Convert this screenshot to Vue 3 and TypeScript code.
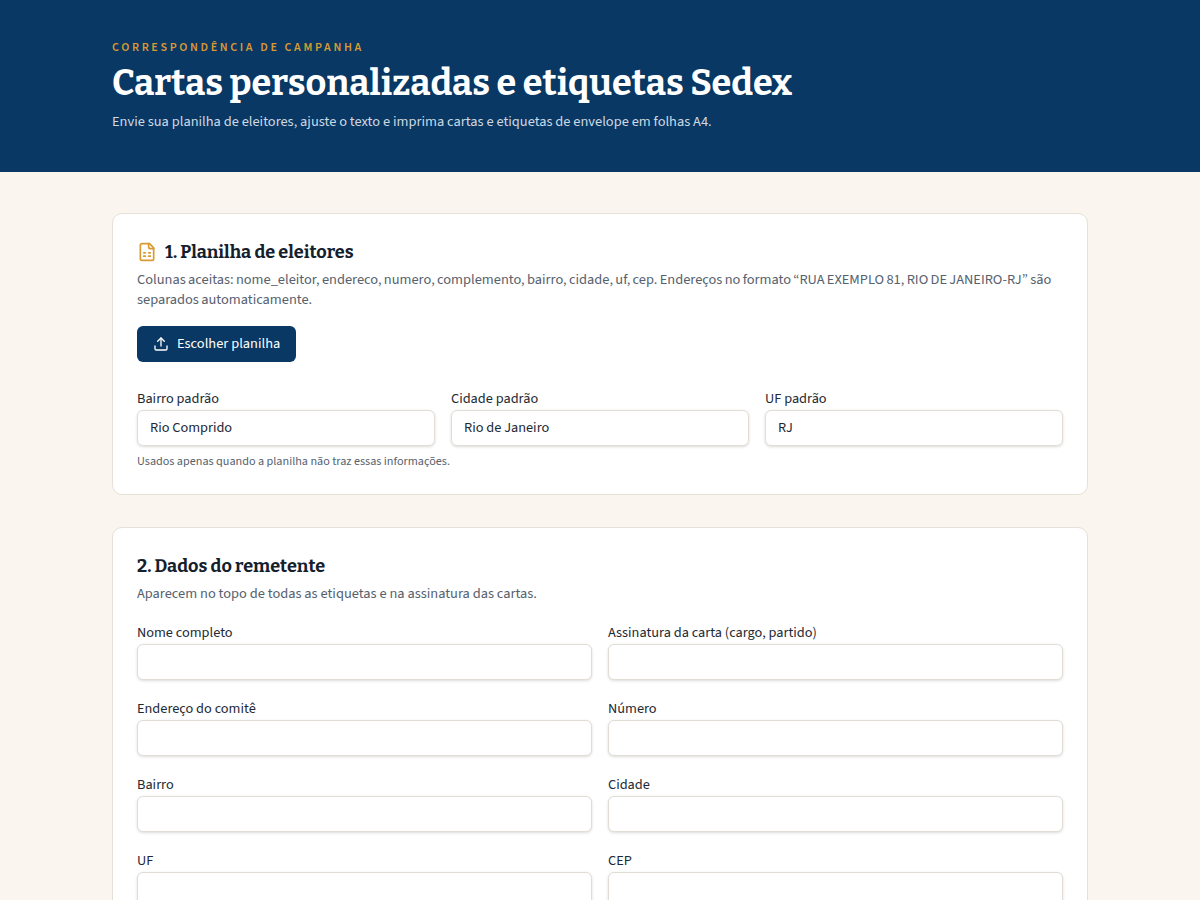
<script setup lang="ts">
interface Field { label: string; value?: string }
const defaults: Field[] = [
  { label: 'Bairro padrão', value: 'Rio Comprido' },
  { label: 'Cidade padrão', value: 'Rio de Janeiro' },
  { label: 'UF padrão', value: 'RJ' },
]
const sender: Field[] = [
  { label: 'Nome completo' },
  { label: 'Assinatura da carta (cargo, partido)' },
  { label: 'Endereço do comitê' },
  { label: 'Número' },
  { label: 'Bairro' },
  { label: 'Cidade' },
  { label: 'UF' },
  { label: 'CEP' },
]
</script>

<template>
  <div class="page">
    <header class="hero">
      <div class="wrap">
        <p class="eyebrow">Correspondência de campanha</p>
        <h1>Cartas personalizadas e etiquetas Sedex</h1>
        <p class="lead">Envie sua planilha de eleitores, ajuste o texto e imprima cartas e etiquetas de envelope em folhas A4.</p>
      </div>
    </header>
    <main class="wrap main">
      <section class="card">
        <h2>
          <svg class="sheet" viewBox="0 0 24 24" width="20" height="20" fill="none" stroke="currentColor" stroke-width="2" stroke-linecap="round" stroke-linejoin="round">
            <path d="M15 2H6a2 2 0 0 0-2 2v16a2 2 0 0 0 2 2h12a2 2 0 0 0 2-2V7Z" />
            <path d="M14 2v4a2 2 0 0 0 2 2h4" />
            <path d="M8 13h2" /><path d="M14 13h2" /><path d="M8 17h2" /><path d="M14 17h2" />
          </svg>
          1. Planilha de eleitores
        </h2>
        <p class="desc tight">Colunas aceitas: nome_eleitor, endereco, numero, complemento, bairro, cidade, uf, cep. Endereços no formato “RUA EXEMPLO 81, RIO DE JANEIRO-RJ” são separados automaticamente.</p>
        <button class="btn" type="button">
          <svg viewBox="0 0 24 24" width="16" height="16" fill="none" stroke="currentColor" stroke-width="2" stroke-linecap="round" stroke-linejoin="round">
            <path d="M21 15v4a2 2 0 0 1-2 2H5a2 2 0 0 1-2-2v-4" />
            <polyline points="17 8 12 3 7 8" />
            <line x1="12" y1="3" x2="12" y2="15" />
          </svg>
          Escolher planilha
        </button>
        <div class="grid three">
          <label v-for="f in defaults" :key="f.label" class="field">
            <span>{{ f.label }}</span>
            <input type="text" :value="f.value" />
          </label>
        </div>
        <p class="hint">Usados apenas quando a planilha não traz essas informações.</p>
      </section>
      <section class="card">
        <h2>2. Dados do remetente</h2>
        <p class="desc">Aparecem no topo de todas as etiquetas e na assinatura das cartas.</p>
        <div class="grid two">
          <label v-for="f in sender" :key="f.label" class="field">
            <span>{{ f.label }}</span>
            <input type="text" />
          </label>
        </div>
      </section>
    </main>
  </div>
</template>

<style>
html, body { margin: 0; background: #faf5ee; }
</style>

<style scoped>
.page {
  font-family: "Source Sans 3", "Noto Sans CJK KR", "Noto Sans", sans-serif;
  color: #14202c;
  font-size: 14.4px;
  line-height: 20px;
  background: #faf5ee;
  min-height: 900px;
}
.wrap { width: 976px; margin: 0 auto; }
.hero { background: #083863; height: 172px; box-sizing: border-box; padding-top: 40px; }
.eyebrow {
  margin: 0;
  font-size: 12px;
  line-height: 16px;
  font-weight: 600;
  letter-spacing: 0.22em;
  text-transform: uppercase;
  color: #d99a32;
}
h1 {
  margin: 7px 0 0;
  font-family: "Bitter", "DejaVu Serif Condensed", "DejaVu Serif", serif;
  font-size: 36px;
  line-height: 40px;
  font-weight: 700;
  color: #fff;
}
.lead { margin: 9px 0 0; color: #cfd9e3; }
.main { padding-top: 41px; display: flex; flex-direction: column; gap: 32px; }
.card {
  background: #fff;
  border: 1px solid #e6e0d6;
  border-radius: 10px;
  padding: 24px;
}
h2 {
  margin: 0;
  display: flex;
  align-items: center;
  gap: 8px;
  font-family: "Bitter", "DejaVu Serif Condensed", "DejaVu Serif", serif;
  font-size: 18px;
  line-height: 28px;
  font-weight: 700;
  color: #14202c;
}
.sheet { color: #d99a32; }
.desc { margin: 4px 0 0; color: #56616e; }
.tight { word-spacing: -0.55px; }
.btn {
  margin-top: 16px;
  height: 36px;
  padding: 0 16px;
  display: inline-flex;
  align-items: center;
  gap: 8px;
  border: 0;
  border-radius: 6px;
  background: #083863;
  color: #fff;
  font: inherit;
}
.grid { display: grid; column-gap: 16px; row-gap: 19px; }
.three { grid-template-columns: repeat(3, 1fr); margin-top: 27px; }
.two { grid-template-columns: repeat(2, 1fr); margin-top: 19px; }
.field { display: flex; flex-direction: column; gap: 1px; font-size: 14.3px; color: #1d2934; }
.field span { display: block; }
input {
  box-sizing: border-box;
  width: 100%;
  height: 36px;
  padding: 0 12px 2px;
  border: 1px solid #e2ddd4;
  border-radius: 6px;
  background: #fff;
  box-shadow: 0 1px 3px rgba(0, 0, 0, 0.14);
  font: inherit;
  color: #1d2934;
  outline: none;
}
.hint { margin: 8px 0 0; font-size: 12.16px; line-height: 16px; color: #56616e; }
</style>
